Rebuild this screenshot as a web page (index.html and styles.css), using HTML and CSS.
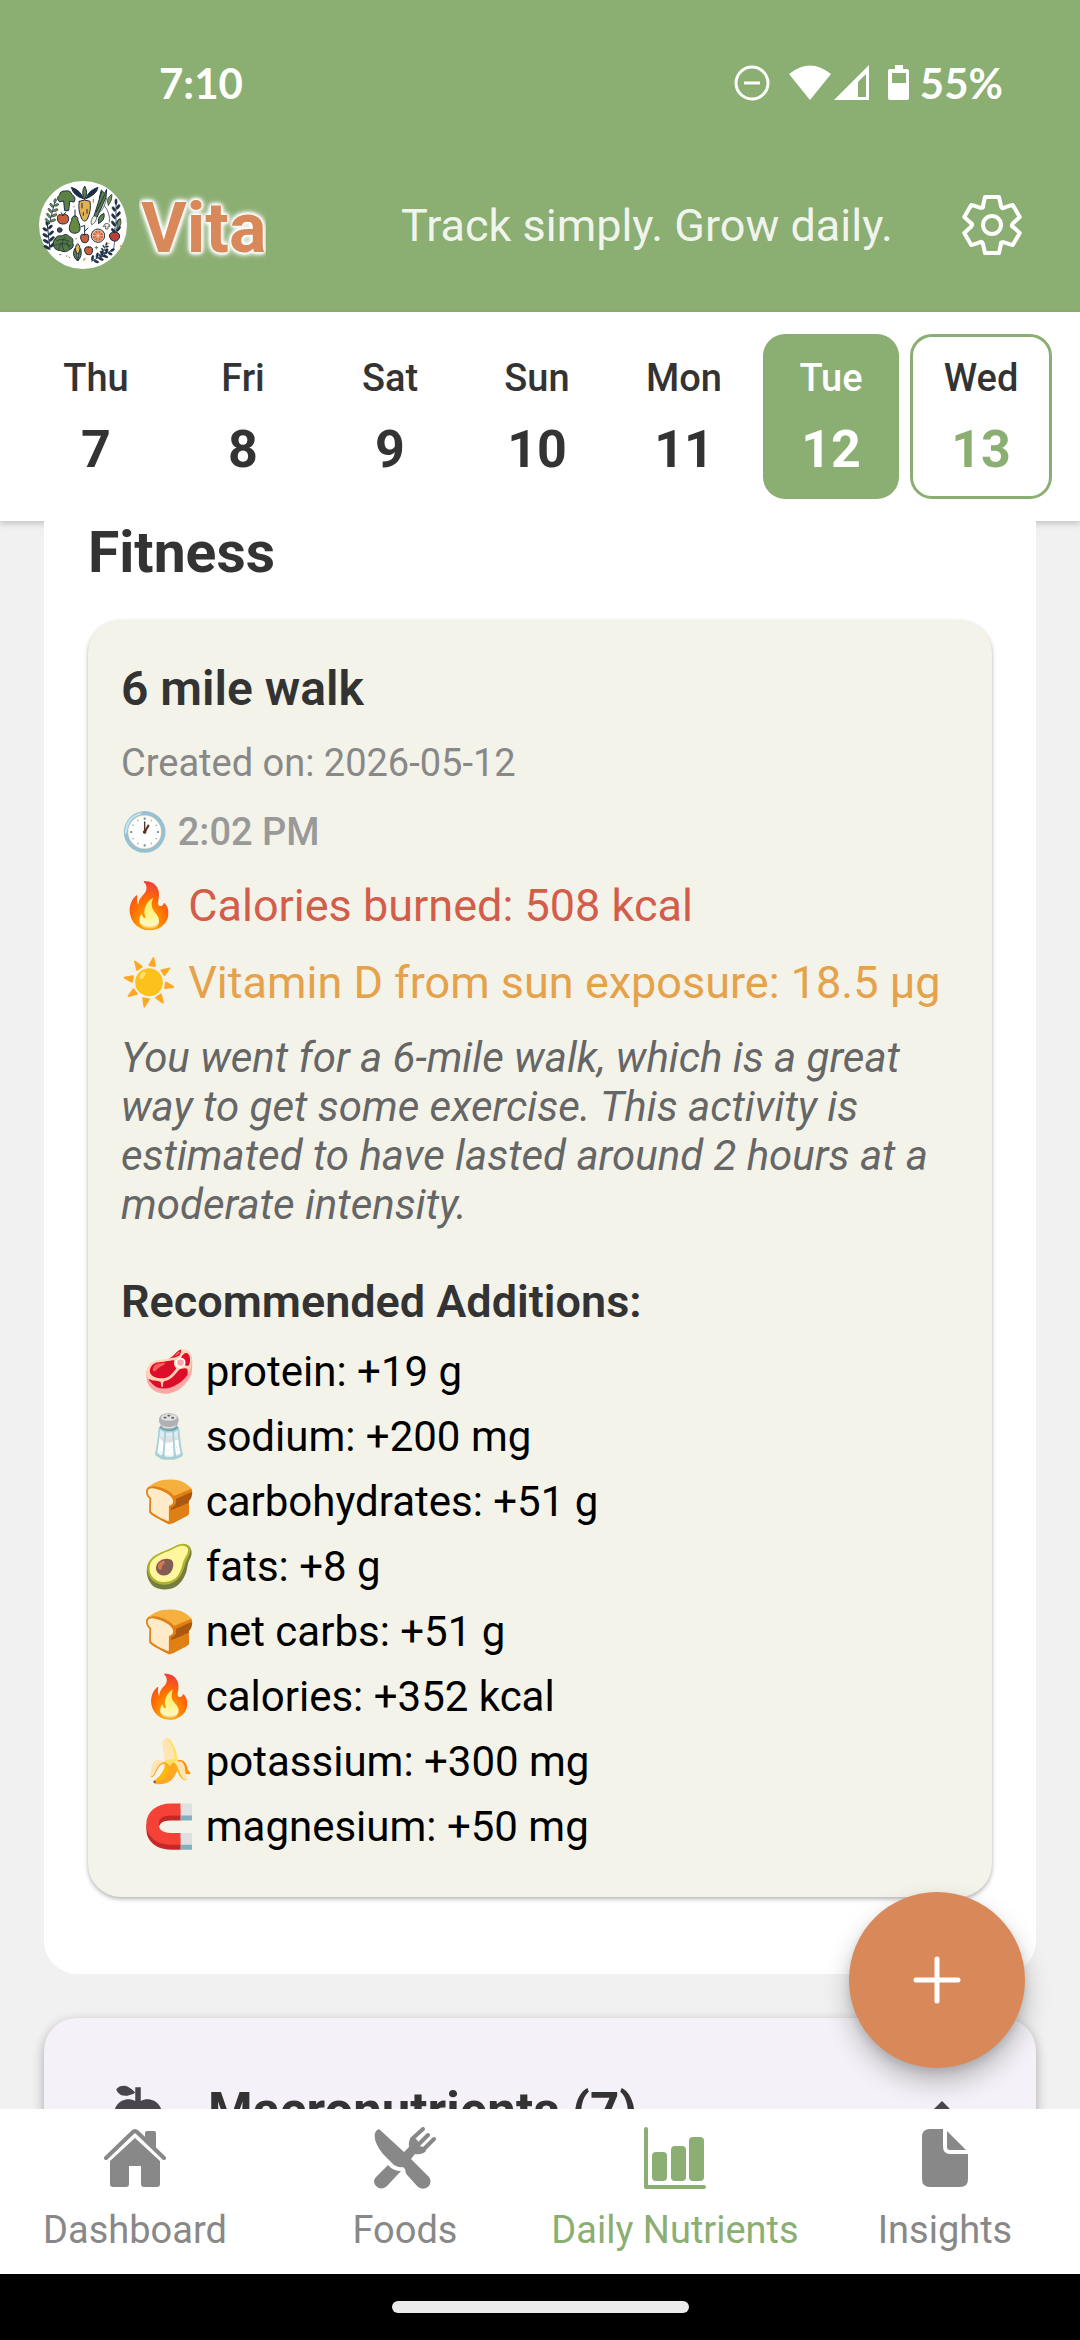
FILE: index.html
```html
<!DOCTYPE html>
<html lang="en">
<head>
<meta charset="utf-8">
<meta name="viewport" content="width=device-width, initial-scale=1">
<title>Vita – Daily Nutrients</title>
<link rel="stylesheet" href="styles.css">
</head>
<body>
<div class="app">
  <header class="top">
    <div class="status">
      <span class="status-text">7:10</span>
      <div class="status-icons">
        <svg class="status-dnd" width="36" height="36" viewBox="0 0 36 36" fill="none" stroke="currentColor" stroke-width="3"><circle cx="18" cy="18" r="16"/><path d="M10 18h16"/></svg>
        <svg width="82" height="36" viewBox="0 0 82 36" fill="currentColor"><path d="M0 9Q21-8 42 9L21 35Z"/><path fill-rule="evenodd" d="M80 0V35H45ZM77 9 69 17V32H77Z"/></svg>
        <svg class="status-battery" width="22" height="36" viewBox="0 0 22 36" fill="currentColor"><path fill-rule="evenodd" d="M7 0h8v4h4q2 0 2 2v27q0 2-2 2H2q-2 0-2-2V6q0-2 2-2h5ZM4 8v10h14V8Z"/></svg>
        <span class="status-text">55%</span>
      </div>
    </div>
    <div class="brand-bar">
      <svg class="logo" viewBox="9 9 264 264" role="img" aria-label="Vita logo">
        <defs>
          <g id="sprig">
            <path d="M0 0V-88" fill="none" stroke="#1c2f45" stroke-width="3"/>
            <g stroke="#1c2f45" stroke-width="2">
              <ellipse cx="-9" cy="-10" rx="10" ry="4" transform="rotate(40 -9 -10)"/><ellipse cx="9" cy="-16" rx="10" ry="4" transform="rotate(-40 9 -16)"/>
              <ellipse cx="-9" cy="-30" rx="10" ry="4" transform="rotate(40 -9 -30)"/><ellipse cx="9" cy="-36" rx="10" ry="4" transform="rotate(-40 9 -36)"/>
              <ellipse cx="-9" cy="-50" rx="9" ry="4" transform="rotate(40 -9 -50)"/><ellipse cx="9" cy="-56" rx="9" ry="4" transform="rotate(-40 9 -56)"/>
              <ellipse cx="-8" cy="-70" rx="8" ry="4" transform="rotate(40 -8 -70)"/><ellipse cx="8" cy="-76" rx="8" ry="4" transform="rotate(-40 8 -76)"/>
              <ellipse cx="0" cy="-90" rx="4" ry="8"/>
            </g>
          </g>
        </defs>
        <circle cx="141" cy="141" r="132" fill="#fff"/>
        <use href="#sprig" fill="#1c2f45" transform="translate(42 216) rotate(-6) scale(1 .9)"/>
        <use href="#sprig" fill="#6f9150" transform="translate(40 138) rotate(14) scale(.9 .8)"/>
        <use href="#sprig" fill="#1c2f45" transform="translate(240 170) scale(.8 1.1)"/>
        <use href="#sprig" fill="#1c2f45" transform="translate(166 250) rotate(62) scale(.8)"/>
        <use href="#sprig" fill="#1c2f45" transform="translate(196 240) rotate(20) scale(.6 .5)"/>
        <g stroke="#1c2f45" stroke-width="3" stroke-linejoin="round" stroke-linecap="round">
          <path fill="#5d8044" d="M83 70 86 98H98L101 70 114 72Q122 58 108 50 104 36 88 39 72 38 71 51 58 60 70 71Z"/>
          <path fill="#1c2f45" d="M142 62Q112 54 106 28 134 36 142 62M150 62Q182 50 186 28 156 38 150 62"/>
          <path fill="#5d8044" d="M146 64Q134 44 146 24 158 44 146 64"/>
          <path fill="#e3b14e" d="M130 70Q146 62 162 70 167 94 154 124 146 134 138 124 124 94 130 70Z"/>
          <path fill="none" d="M138 76v14M153 94v12M142 104v8"/>
          <path fill="#5d8044" d="M174 114 198 38 206 46 212 34 210 58 184 116Z"/>
          <path fill="none" d="M181 102 206 50M190 60 196 36"/>
          <path fill="#f4f0e2" stroke-width="2" d="M173 114Q161 130 167 140 180 136 183 116Z"/>
          <path fill="none" stroke-width="2" d="M220 132Q224 108 206 84M194 100Q206 88 212 60"/>
          <path fill="#6f9150" stroke-width="2" d="M217 82Q208 60 228 49 230 68 217 82M246 150Q238 132 253 122 260 138 246 150"/>
          <path fill="#5d8044" d="M188 136Q182 116 204 106 208 128 188 136"/>
          <path fill="#c85f38" d="M80 112Q64 104 64 122 66 139 82 138 98 138 98 121 96 104 80 112Z"/>
          <path fill="none" d="M80 112 76 104M80 111 90 103"/>
          <path fill="#67893f" d="M117 114Q106 114 107 128 96 148 102 160 116 172 130 160 136 148 126 128 126 114 117 114Z"/>
          <path fill="none" d="M117 113V96"/>
          <circle cx="71" cy="156" r="7" fill="#3c4a66"/>
          <path fill="#54793f" d="M57 184Q62 170 78 174 90 164 100 176 114 180 110 194 116 208 102 214 88 226 74 218 52 216 53 200 48 190 57 184Z"/>
          <path fill="none" stroke-width="2" d="M62 188Q80 180 100 190M60 202Q80 190 104 204M84 218Q72 196 86 178M68 212 76 196M100 210 92 192"/>
          <path fill="#c85f38" d="M146 170Q132 164 134 182 138 196 146 194 156 196 158 182 160 164 146 170Z"/>
          <path fill="none" d="M146 169V142L136 146M146 160 156 150"/>
          <path fill="#e9b94f" d="M118 226Q116 204 125 197 134 204 132 226Z"/>
          <path fill="#5d8044" d="M124 248Q106 234 116 212 124 222 124 248M126 248Q140 234 134 212 126 222 126 248"/>
          <path fill="#c85f38" d="M158 207Q144 204 146 220 150 232 158 230 168 232 170 218 170 204 158 207Z"/>
          <path fill="#b84238" d="M236 163Q220 162 220 174 222 188 236 190 250 188 251 174 250 162 236 163Z"/>
          <path fill="none" stroke-width="2" d="M236 190 233 212M236 163V150"/>
          <path fill="#f4f0e2" stroke-width="2" d="M202 145Q204 136 213 136 222 138 222 145H216V153H209V145Z"/>
        </g>
        <circle cx="186" cy="173" r="20" fill="#f3d9c4" stroke="#1c2f45" stroke-width="3"/>
        <circle cx="186" cy="173" r="16" fill="#d9693c"/>
        <path d="M186 157V189M170 173H202M175 162 197 184M197 162 175 184" stroke="#f6e3d2" stroke-width="2"/>
        <path d="M172 62V74M122 180 118 184M148 240 142 248M214 196H220M62 104 58 108M114 88V84M252 206 256 202M90 234H94" stroke="#e08a4a" stroke-width="4"/>
        <path d="M181 204V214M176 209H186M70 230H76M98 236 102 240" stroke="#5d8044" stroke-width="3"/>
      </svg>
      <h1 class="brand">Vita</h1>
      <p class="tagline">Track simply. Grow daily.</p>
      <button class="settings" type="button" aria-label="Settings">
        <svg width="66" height="66" viewBox="-33 -33 66 66" fill="none" stroke="currentColor" stroke-width="4" stroke-linejoin="round" stroke-linecap="round">
          <defs><path id="tooth" d="M-9-19-7-28H7L9-19Q10-16 12-17"/></defs>
          <use href="#tooth"/><use href="#tooth" transform="rotate(60)"/><use href="#tooth" transform="rotate(120)"/><use href="#tooth" transform="rotate(180)"/><use href="#tooth" transform="rotate(240)"/><use href="#tooth" transform="rotate(300)"/>
          <circle r="9"/>
        </svg>
      </button>
    </div>
  </header>

  <div class="days">
    <button type="button" class="day"><span class="day-name">Thu</span><span class="day-num">7</span></button>
    <button type="button" class="day"><span class="day-name">Fri</span><span class="day-num">8</span></button>
    <button type="button" class="day"><span class="day-name">Sat</span><span class="day-num">9</span></button>
    <button type="button" class="day"><span class="day-name">Sun</span><span class="day-num">10</span></button>
    <button type="button" class="day"><span class="day-name">Mon</span><span class="day-num">11</span></button>
    <button type="button" class="day day-selected"><span class="day-name">Tue</span><span class="day-num">12</span></button>
    <button type="button" class="day day-today"><span class="day-name">Wed</span><span class="day-num">13</span></button>
  </div>

  <main class="content">
    <section class="fitness">
      <h2 class="fitness-title">Fitness</h2>
      <article class="activity">
        <h3 class="activity-title">6 mile walk</h3>
        <p class="activity-date">Created on: 2026-05-12</p>
        <p class="activity-time">🕐 2:02 PM</p>
        <p class="activity-stat burned">🔥 Calories burned: 508 kcal</p>
        <p class="activity-stat vitamin">☀️ Vitamin D from sun exposure: 18.5 μg</p>
        <p class="activity-note">You went for a 6-mile walk, which is a great way to get some exercise. This activity is estimated to have lasted around 2 hours at a moderate intensity.</p>
        <div class="additions">
          <h4 class="additions-title">Recommended Additions:</h4>
          <ul class="additions-list">
            <li>🥩 protein: +19 g</li>
            <li>🧂 sodium: +200 mg</li>
            <li>🍞 carbohydrates: +51 g</li>
            <li>🥑 fats: +8 g</li>
            <li>🍞 net carbs: +51 g</li>
            <li>🔥 calories: +352 kcal</li>
            <li>🍌 potassium: +300 mg</li>
            <li>🧲 magnesium: +50 mg</li>
          </ul>
        </div>
      </article>
    </section>

    <section class="macros">
      <svg width="66" height="66" viewBox="0 0 24 24" fill="currentColor"><path d="M20 10C22 13 17 22 15 22C13 22 13 21 12 21C11 21 11 22 9 22C7 22 2 13 4 10C6 7 9 7 11 8V5C5.38 8.07 4.11 3.78 4.11 3.78C4.11 3.78 6.77.19 11 5V3H13V8C15 7 18 7 20 10Z"/></svg>
      <h2 class="macros-title">Macronutrients (7)</h2>
      <svg width="66" height="66" viewBox="0 0 24 24" fill="currentColor"><path d="M7.41 15.41 12 10.83 16.59 15.41 18 14 12 8 6 14Z"/></svg>
    </section>
  </main>

  <div class="bottom">
    <button class="fab" type="button" aria-label="Add">
      <svg width="66" height="66" viewBox="0 0 66 66" fill="none" stroke="currentColor" stroke-width="5" stroke-linecap="round"><path d="M33 12V54M12 33H54"/></svg>
    </button>
    <nav class="tabs">
      <a class="tab" href="#dashboard">
        <svg width="62" height="62" viewBox="0 0 62 62" fill="currentColor"><path d="M31 11 56 34V57Q56 60 53 60H40Q37 60 37 57V39H25V57Q25 60 22 60H9Q6 60 6 57V34Z"/><path d="M41 14V6Q41 4 43 4H50Q52 4 52 6V24Z"/><path d="M2 31 29 5Q31 3 33 5L60 31" fill="none" stroke="currentColor" stroke-width="4" stroke-linecap="round"/></svg>
        Dashboard
      </a>
      <a class="tab" href="#foods">
        <svg width="66" height="62" viewBox="0 0 66 62" fill="currentColor"><path d="M7 2 32 25 37 20Q36 12 41 9L46 14 47 19 52 20 54 24Q50 28 43 27L39 32 57 50Q60 54 57 59 52 64 46 60L36 49Q33 46 33 42L31 40Q27 41 22 38L11 27Q1 15 3 6 4 3 7 2Z"/><path d="M40 12 51 2M46 18 56 8M52 22 62 12" stroke="currentColor" stroke-width="4" stroke-linecap="round"/><path d="M16 38Q21 44 29 44L15 59Q9 64 4 59 0 54 4 50Z"/></svg>
        Foods
      </a>
      <a class="tab tab-active" href="#nutrients" aria-current="page">
        <svg width="62" height="62" viewBox="0 0 62 62" fill="currentColor"><path d="M2 2V60H60" fill="none" stroke="currentColor" stroke-width="4" stroke-linecap="round" stroke-linejoin="round"/><rect x="8" y="25" width="15" height="29" rx="4"/><rect x="27" y="19" width="15" height="35" rx="4"/><rect x="45" y="10" width="15" height="44" rx="4"/></svg>
        Daily Nutrients
      </a>
      <a class="tab" href="#insights">
        <svg width="62" height="62" viewBox="0 0 62 62" fill="currentColor"><path d="M16 2H29V19Q29 27 36 27H54V52Q54 60 46 60H16Q8 60 8 52V10Q8 2 16 2Z"/><path d="M33 4 52 23H36Q33 23 33 20Z"/></svg>
        Insights
      </a>
    </nav>
    <div class="home-bar"><span class="home-pill"></span></div>
  </div>
</div>
</body>
</html>
```
FILE: styles.css
```css
:root {
  --green: #8bae72;
  --orange: #d9885a;
  --ink: #333;
}

* {
  box-sizing: border-box;
  margin: 0;
}

body {
  background: #f1f1f1;
  color: var(--ink);
  font-family: Roboto, "Noto Color Emoji", sans-serif;
}

button {
  border: 0;
  padding: 0;
  background: none;
  color: inherit;
  font: inherit;
}

svg {
  display: block;
  flex: none;
}

.app {
  display: flex;
  flex-direction: column;
  height: 100vh;
}

/* Header */
.top {
  flex: none;
  background: var(--green);
  color: #fff;
}

.status {
  display: flex;
  justify-content: space-between;
  align-items: center;
  padding: 58px 77px 26px 159px;
}

.status-text {
  font: 700 42px/50px Lato, sans-serif;
}

.status-icons {
  display: flex;
  align-items: center;
}

.status-dnd {
  margin-right: 19px;
}

.status-battery {
  margin: 0 10px 0 17px;
}

.brand-bar {
  display: flex;
  align-items: center;
  padding: 47px 55px 43px 39px;
}

.logo {
  width: 88px;
  height: 88px;
}

.brand {
  margin: 5px 0 0 12px;
  padding-left: 2px;
  overflow: hidden;
  color: var(--orange);
  font-size: 70px;
  font-weight: 700;
  line-height: 82px;
  text-shadow: 0 0 3px #fff, 0 0 3px #fff, 0 0 4px #fff, 0 0 4px #fff, 0 0 5px #fff, 0 0 6px #fff, 0 0 8px #fff;
}

.tagline {
  margin-left: auto;
  color: rgba(255, 255, 255, 0.9);
  font-size: 45px;
  line-height: 53px;
}

.settings {
  margin-left: 66px;
}

/* Day picker */
.days {
  display: flex;
  flex: none;
  gap: 11px;
  padding: 22px 28px;
  background: #fff;
  box-shadow: 0 3px 6px rgba(0, 0, 0, 0.18);
}

.day {
  display: flex;
  flex: 1 1 0;
  flex-direction: column;
  gap: 19px;
  align-items: center;
  box-sizing: content-box;
  padding: 22px 0 19px;
  border-radius: 22px;
}

.day-name {
  font-size: 38px;
  font-weight: 500;
  line-height: 45px;
}

.day-num {
  font-size: 52px;
  font-weight: 700;
  line-height: 60px;
}

.day-selected {
  background: var(--green);
  color: #fff;
}

.day-today {
  padding: 19px 0 16px;
  border: 3px solid var(--green);
}

.day-today .day-num {
  color: var(--green);
}

/* Scrolling content */
.content {
  flex: 1 1 0;
  min-height: 0;
  padding: 0 44px;
  overflow: hidden;
}

.fitness {
  padding: 0 44px 77px;
  border-radius: 0 0 33px 33px;
  background: #fff;
}

.fitness-title {
  padding-bottom: 35px;
  font-size: 57px;
  font-weight: 700;
  line-height: 64px;
}

.activity {
  display: flex;
  flex-direction: column;
  gap: 24px;
  padding: 41px 33px 38px;
  border-radius: 33px;
  background: #f3f3ea;
  box-shadow: 0 2px 4px rgba(0, 0, 0, 0.3);
}

.activity-title {
  font-size: 48px;
  font-weight: 600;
  line-height: 56px;
}

.activity-date,
.activity-time {
  color: #888;
  font-size: 38px;
  line-height: 45px;
}

.activity-time {
  color: #999;
  font-weight: 500;
}

.activity-stat {
  font-size: 45px;
  line-height: 53px;
}

.burned {
  color: #d45d4a;
}

.vitamin {
  color: #e5a24a;
}

.activity-note {
  color: #666;
  font-size: 42px;
  font-style: italic;
  line-height: 49px;
}

.additions {
  padding-top: 22px;
}

.additions-title {
  padding-bottom: 11px;
  font-size: 45px;
  font-weight: 600;
  line-height: 53px;
}

.additions-list {
  padding-left: 22px;
  color: #000;
  font-size: 42px;
  line-height: 65px;
  list-style: none;
}

.macros {
  display: flex;
  align-items: center;
  margin-top: 44px;
  padding: 61px;
  border-radius: 33px;
  background: #f4f2f8;
  box-shadow: 0 4px 12px rgba(0, 0, 0, 0.3);
  color: #49454f;
}

.macros-title {
  flex: 1;
  padding-left: 37px;
  color: var(--ink);
  font-size: 51px;
  font-weight: 700;
  line-height: 60px;
}

/* Bottom navigation */
.bottom {
  position: relative;
  flex: none;
}

.fab {
  position: absolute;
  right: 55px;
  bottom: 100%;
  display: grid;
  place-items: center;
  width: 176px;
  height: 176px;
  margin-bottom: 41px;
  border-radius: 50%;
  background: var(--orange);
  box-shadow: 0 14px 26px rgba(0, 0, 0, 0.25), 0 4px 8px rgba(0, 0, 0, 0.1);
  color: #fff;
}

.tabs {
  position: relative;
  display: grid;
  grid-template-columns: repeat(4, 1fr);
  background: #fff;
}

.tab {
  display: flex;
  flex-direction: column;
  gap: 19px;
  align-items: center;
  padding: 18px 0 21px;
  color: #888;
  font-size: 38px;
  line-height: 45px;
  text-decoration: none;
  white-space: nowrap;
}

.tab-active {
  color: var(--green);
}

.home-bar {
  display: flex;
  justify-content: center;
  padding: 27px 0;
  background: #000;
}

.home-pill {
  width: 297px;
  height: 12px;
  border-radius: 6px;
  background: #ebebeb;
}
```
